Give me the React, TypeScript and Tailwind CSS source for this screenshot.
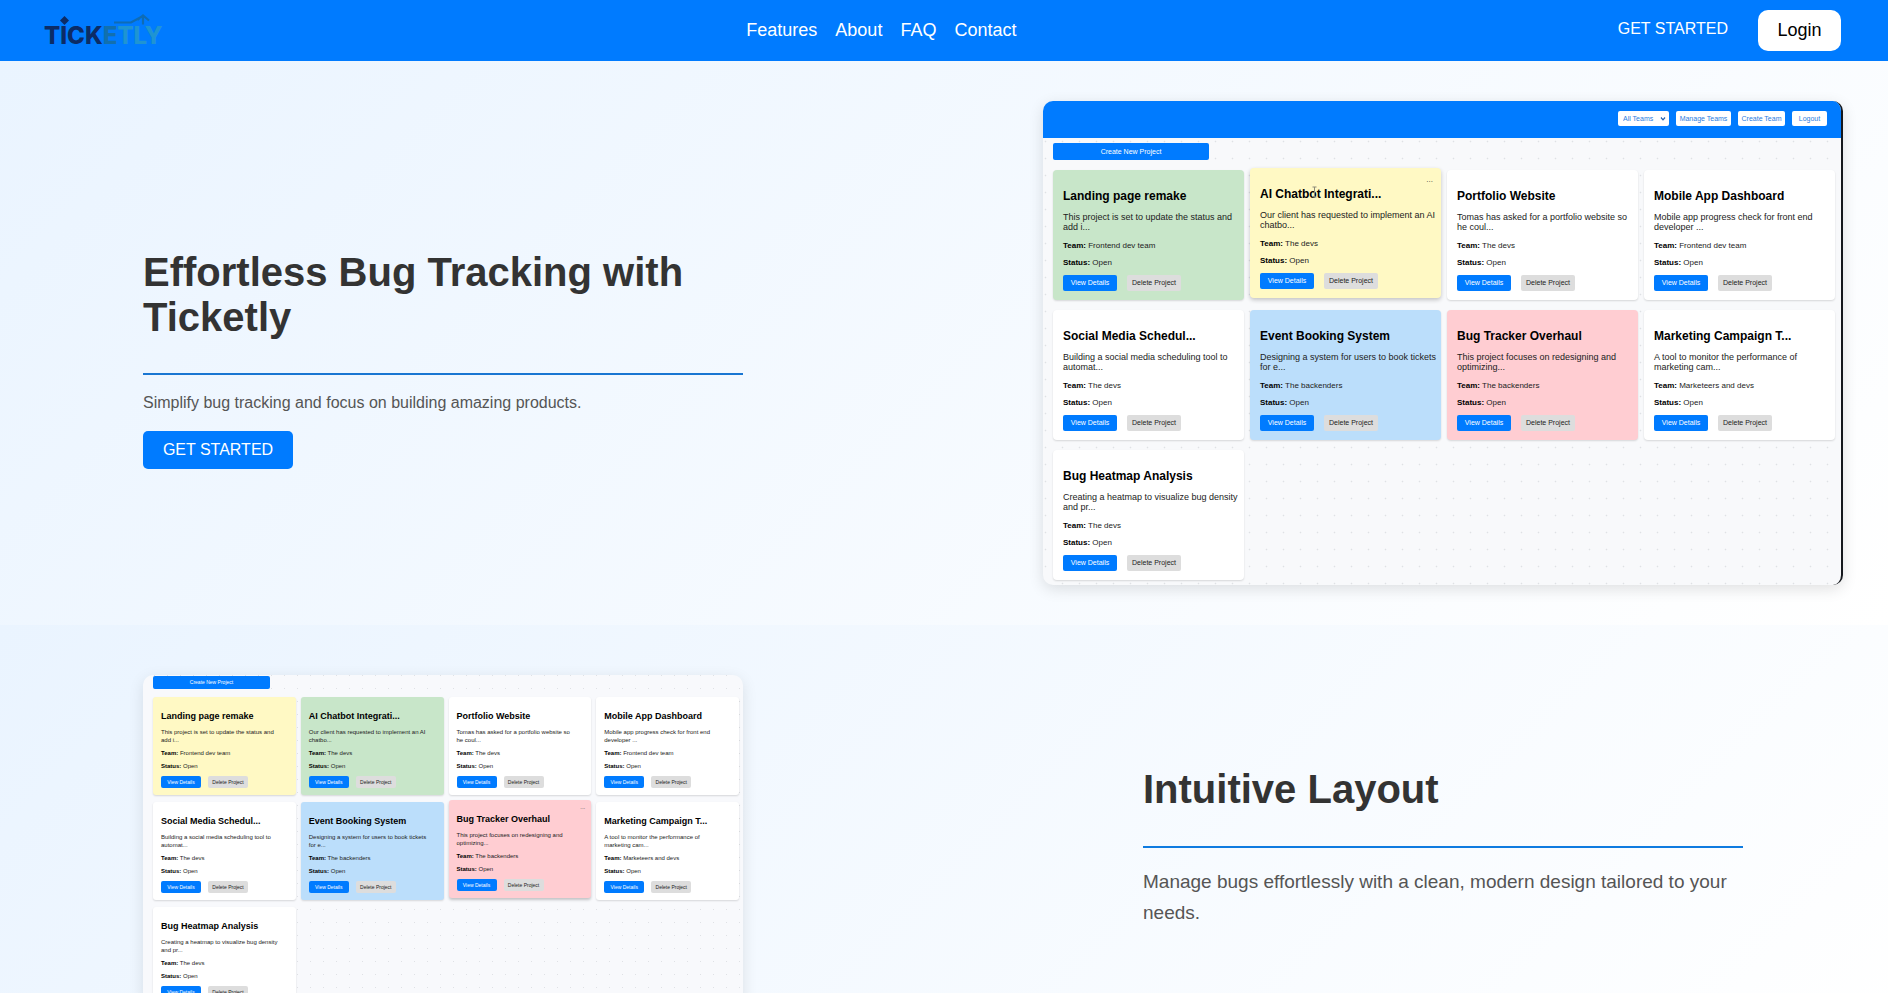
import React from "react";

type Tone = "green" | "yellow" | "white" | "blue" | "red";

interface Project {
  title: string;
  lines: [string, string];
  team: string;
  tone: Tone;
  active?: boolean;
}

const tones: Record<Tone, string> = {
  green: "bg-[#c8e6c9]",
  yellow: "bg-[#fff9c4]",
  white: "bg-white",
  blue: "bg-[#bbdefb]",
  red: "bg-[#ffcdd2]",
};

const projects: Project[] = [
  { title: "Landing page remake", lines: ["This project is set to update the status and", "add i..."], team: "Frontend dev team", tone: "green" },
  { title: "AI Chatbot Integrati...", lines: ["Our client has requested to implement an AI", "chatbo..."], team: "The devs", tone: "yellow" },
  { title: "Portfolio Website", lines: ["Tomas has asked for a portfolio website so", "he coul..."], team: "The devs", tone: "white" },
  { title: "Mobile App Dashboard", lines: ["Mobile app progress check for front end", "developer ..."], team: "Frontend dev team", tone: "white" },
  { title: "Social Media Schedul...", lines: ["Building a social media scheduling tool to", "automat..."], team: "The devs", tone: "white" },
  { title: "Event Booking System", lines: ["Designing a system for users to book tickets", "for e..."], team: "The backenders", tone: "blue" },
  { title: "Bug Tracker Overhaul", lines: ["This project focuses on redesigning and", "optimizing..."], team: "The backenders", tone: "red" },
  { title: "Marketing Campaign T...", lines: ["A tool to monitor the performance of", "marketing cam..."], team: "Marketeers and devs", tone: "white" },
  { title: "Bug Heatmap Analysis", lines: ["Creating a heatmap to visualize bug density", "and pr..."], team: "The devs", tone: "white" },
];

const heroProjects = projects.map((p, i) => ({ ...p, active: i === 1 }));
const layoutProjects = projects.map((p, i) => ({
  ...p,
  active: i === 6,
  tone: i === 0 ? ("yellow" as Tone) : i === 1 ? ("green" as Tone) : p.tone,
}));

function Logo() {
  return (
    <svg viewBox="0 0 120 38" className="h-[38px] w-[120px] overflow-visible" role="img" aria-label="Ticketly">
      <text x="-1" y="30" fontFamily="Inter, sans-serif" fontWeight="800" fontSize="24">
        <tspan fill="#0c2c66">TICK</tspan>
        <tspan fill="#1270ae">E</tspan>
        <tspan fill="#1f94d2">TLY</tspan>
      </text>
      <path d="M19.500 2 L24 6.500 L19.500 11 L15 6.500 Z" fill="#0c2c66" />
      <path d="M69 8.500 H86 L98 2 M92.500 6 L98 1.500 L104 6.500 M98 2 V10.500" fill="none" stroke="#0f6cb4" strokeWidth="2.200" />
    </svg>
  );
}

function LargeCard({ project }: { project: Project }) {
  return (
    <article
      className={`relative rounded-[4px] px-2.5 pb-[9px] pt-[19px] ${tones[project.tone]} ${
        project.active ? "-translate-y-0.5 shadow-[0_2px_4px_rgba(0,0,0,0.22)]" : "shadow-[0_1px_2px_rgba(0,0,0,0.14)]"
      }`}
    >
      {project.active && (
        <>
          <span className="absolute right-2 top-2 text-[8px] leading-[8px] text-[#444]">...</span>
          <svg viewBox="0 0 5 12" className="absolute left-[62px] top-[18px] h-3 w-[5px]" aria-hidden="true">
            <path d="M0.500 1 H4.500 M2.500 1 V11 M0.500 11 H4.500" stroke="#8b8a78" strokeWidth="1" />
          </svg>
        </>
      )}
      <h3 className="whitespace-nowrap text-[12px] font-bold leading-[14px] text-black">{project.title}</h3>
      <p className="mt-[9px] whitespace-nowrap text-[9px] leading-[10px] text-[#222]">
        {project.lines[0]}
        <br />
        {project.lines[1]}
      </p>
      <p className="mt-[9px] whitespace-nowrap text-[8px] leading-[9px] text-[#222]">
        <strong className="text-black">Team:</strong> {project.team}
      </p>
      <p className="mt-2 whitespace-nowrap text-[8px] leading-[9px] text-[#222]">
        <strong className="text-black">Status:</strong> Open
      </p>
      <div className="mt-2 flex gap-2.5">
        <button className="h-4 w-[54px] whitespace-nowrap rounded-[2px] bg-[#007bff] text-[7px] leading-[16px] text-white">View Details</button>
        <button className="h-4 w-[54px] whitespace-nowrap rounded-[2px] bg-[#dddddd] text-[7px] leading-[16px] text-[#222]">Delete Project</button>
      </div>
    </article>
  );
}

function SmallCard({ project }: { project: Project }) {
  return (
    <article
      className={`relative rounded-[3px] px-2 pb-[7px] pt-[14px] ${tones[project.tone]} ${
        project.active ? "-translate-y-0.5 shadow-[0_2px_3px_rgba(0,0,0,0.22)]" : "shadow-[0_1px_2px_rgba(0,0,0,0.14)]"
      }`}
    >
      {project.active && <span className="absolute right-1.5 top-1 text-[6px] leading-[6px] text-[#444]">...</span>}
      <h3 className="whitespace-nowrap text-[9px] font-bold leading-[10px] text-black">{project.title}</h3>
      <p className="mt-[7px] whitespace-nowrap text-[6px] leading-[8px] text-[#222]">
        {project.lines[0]}
        <br />
        {project.lines[1]}
      </p>
      <p className="mt-1.5 whitespace-nowrap text-[6px] leading-[7px] text-[#222]">
        <strong className="text-black">Team:</strong> {project.team}
      </p>
      <p className="mt-1.5 whitespace-nowrap text-[6px] leading-[7px] text-[#222]">
        <strong className="text-black">Status:</strong> Open
      </p>
      <div className="mt-1.5 flex gap-[7px]">
        <button className="h-3 w-10 whitespace-nowrap rounded-[2px] bg-[#007bff] text-[5px] leading-[12px] text-white">View Details</button>
        <button className="h-3 w-10 whitespace-nowrap rounded-[2px] bg-[#dddddd] text-[5px] leading-[12px] text-[#222]">Delete Project</button>
      </div>
    </article>
  );
}

function HeroDashboard() {
  const tool = "h-[15px] rounded-[2px] bg-white text-[7px] leading-[15px] text-[#2b7de0] whitespace-nowrap";
  return (
    <div className="w-[800px] shrink-0 overflow-hidden rounded-[10px] border-r-2 border-[#15181d] bg-[#f8f9fb] shadow-[0_4px_15px_rgba(0,0,0,0.12)]">
      <div className="flex h-[37px] items-center justify-end gap-[7px] bg-[#007bff] pb-0.5 pr-3.5">
        <div className="relative flex">
          <select aria-label="Team filter" className={`${tool} w-[51px] appearance-none pl-[5px]`}>
            <option>All Teams</option>
          </select>
          <svg viewBox="0 0 6 4" className="absolute right-[3px] top-[6px] h-1 w-1.5" aria-hidden="true">
            <path d="M1 0.500 L3 2.800 L5 0.500" fill="none" stroke="#1f5fb0" strokeWidth="1.200" />
          </svg>
        </div>
        <button className={`${tool} w-[55px]`}>Manage Teams</button>
        <button className={`${tool} w-[47px]`}>Create Team</button>
        <button className={`${tool} w-[35px]`}>Logout</button>
      </div>
      <div className="bg-[radial-gradient(circle_at_center,#dfe1e5_0.7px,transparent_1.1px)] bg-[length:17px_17px] bg-[position:-6px_-5px] pb-[5px] pl-2.5 pr-[6px] pt-[5px]">
        <button className="block h-[17px] w-[156px] rounded-[2px] bg-[#007bff] text-[7px] leading-[17px] text-white">Create New Project</button>
        <div className="mt-2.5 grid grid-cols-4 gap-x-1.5 gap-y-2.5">
          {heroProjects.map((p) => (
            <LargeCard key={p.title} project={p} />
          ))}
        </div>
      </div>
    </div>
  );
}

function LayoutDashboard() {
  return (
    <div className="w-[600px] shrink-0 overflow-hidden rounded-[10px] bg-[#f8f9fc] shadow-[0_4px_15px_rgba(0,0,0,0.1)]">
      <div className="bg-[radial-gradient(circle_at_center,#dfe1e5_0.6px,transparent_1px)] bg-[length:13px_13px] bg-[position:5px_-6px] pb-1 pl-2.5 pr-1 pt-px">
        <button className="block h-[13px] w-[117px] rounded-[2px] bg-[#007bff] text-[5px] leading-[13px] text-white">Create New Project</button>
        <div className="mt-2 grid grid-cols-4 gap-x-[5px] gap-y-[7px]">
          {layoutProjects.map((p) => (
            <SmallCard key={p.title} project={p} />
          ))}
        </div>
      </div>
    </div>
  );
}

export default function App() {
  return (
    <div className="font-['Liberation_Sans',Arial,sans-serif]">
      <header className="flex h-[61px] items-center justify-between bg-[#007bff] pl-[45px] pr-[47px] text-white">
        <a href="#home" className="pt-1">
          <Logo />
        </a>
        <nav className="mr-5 flex gap-[18px] pb-0.5 text-[18px] leading-6" aria-label="Main">
          <a href="#features">Features</a>
          <a href="#about">About</a>
          <a href="#faq">FAQ</a>
          <a href="#contact">Contact</a>
        </nav>
        <div className="flex items-center gap-[30px]">
          <a href="#start" className="pb-1 text-[16px] leading-6">GET STARTED</a>
          <button className="h-[41px] w-[83px] rounded-[10px] bg-white text-[18px] text-black">Login</button>
        </div>
      </header>
      <main>
        <section className="flex items-center justify-between bg-[linear-gradient(135deg,#eaf4ff,#ffffff)] py-10 pl-[143px] pr-[45px]">
          <div className="w-[600px] pt-[33px]">
            <h1 className="text-[40px] font-bold leading-[45px] text-[#333]">Effortless Bug Tracking with Ticketly</h1>
            <hr className="mt-[33px] border-t-2 border-[#1976d2]" />
            <p className="mt-4 text-[16px] leading-6 text-[#555]">Simplify bug tracking and focus on building amazing products.</p>
            <button className="mt-4 block h-[38px] w-[150px] rounded-[5px] bg-[#007bff] text-[16px] text-white">GET STARTED</button>
          </div>
          <HeroDashboard />
        </section>
        <section className="flex items-center justify-between bg-[linear-gradient(135deg,#eaf4ff,#ffffff)] py-[50px] pl-[143px] pr-[145px]">
          <LayoutDashboard />
          <div className="w-[600px] pt-2.5">
            <h2 className="text-[40px] font-bold leading-[45px] text-[#333]">Intuitive Layout</h2>
            <hr className="mt-[34px] border-t-2 border-[#0f7be0]" />
            <p className="mt-[18px] text-[19px] leading-[31px] text-[#555]">
              Manage bugs effortlessly with a clean, modern design tailored to your needs.
            </p>
          </div>
        </section>
      </main>
    </div>
  );
}
